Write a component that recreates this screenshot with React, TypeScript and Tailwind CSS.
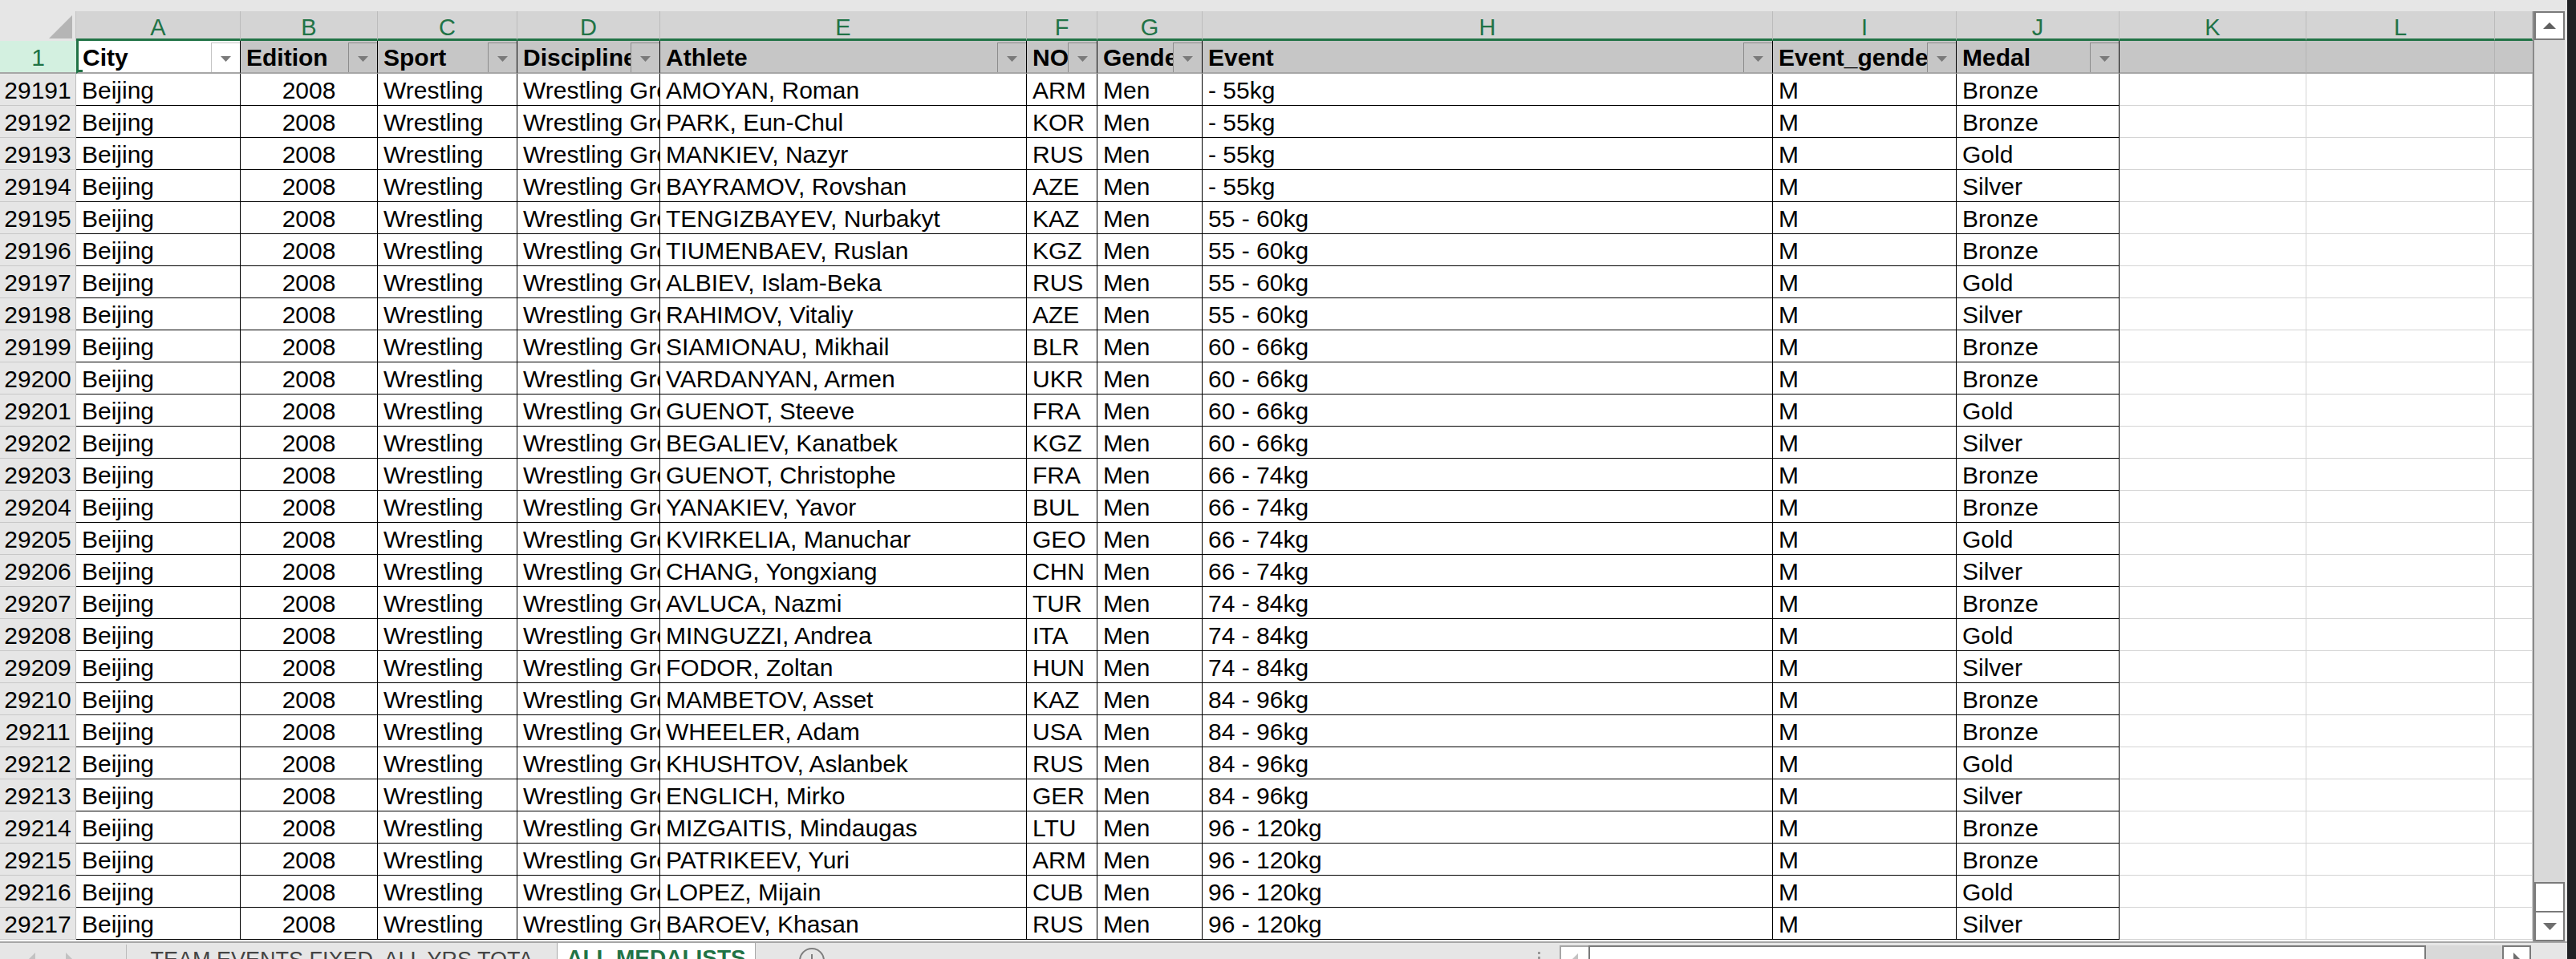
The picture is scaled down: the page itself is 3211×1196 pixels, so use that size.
import React from 'react';

const rows: [string, string, string, string, string][] = [
  ['29191', 'AMOYAN, Roman', 'ARM', '- 55kg', 'Bronze'],
  ['29192', 'PARK, Eun-Chul', 'KOR', '- 55kg', 'Bronze'],
  ['29193', 'MANKIEV, Nazyr', 'RUS', '- 55kg', 'Gold'],
  ['29194', 'BAYRAMOV, Rovshan', 'AZE', '- 55kg', 'Silver'],
  ['29195', 'TENGIZBAYEV, Nurbakyt', 'KAZ', '55 - 60kg', 'Bronze'],
  ['29196', 'TIUMENBAEV, Ruslan', 'KGZ', '55 - 60kg', 'Bronze'],
  ['29197', 'ALBIEV, Islam-Beka', 'RUS', '55 - 60kg', 'Gold'],
  ['29198', 'RAHIMOV, Vitaliy', 'AZE', '55 - 60kg', 'Silver'],
  ['29199', 'SIAMIONAU, Mikhail', 'BLR', '60 - 66kg', 'Bronze'],
  ['29200', 'VARDANYAN, Armen', 'UKR', '60 - 66kg', 'Bronze'],
  ['29201', 'GUENOT, Steeve', 'FRA', '60 - 66kg', 'Gold'],
  ['29202', 'BEGALIEV, Kanatbek', 'KGZ', '60 - 66kg', 'Silver'],
  ['29203', 'GUENOT, Christophe', 'FRA', '66 - 74kg', 'Bronze'],
  ['29204', 'YANAKIEV, Yavor', 'BUL', '66 - 74kg', 'Bronze'],
  ['29205', 'KVIRKELIA, Manuchar', 'GEO', '66 - 74kg', 'Gold'],
  ['29206', 'CHANG, Yongxiang', 'CHN', '66 - 74kg', 'Silver'],
  ['29207', 'AVLUCA, Nazmi', 'TUR', '74 - 84kg', 'Bronze'],
  ['29208', 'MINGUZZI, Andrea', 'ITA', '74 - 84kg', 'Gold'],
  ['29209', 'FODOR, Zoltan', 'HUN', '74 - 84kg', 'Silver'],
  ['29210', 'MAMBETOV, Asset', 'KAZ', '84 - 96kg', 'Bronze'],
  ['29211', 'WHEELER, Adam', 'USA', '84 - 96kg', 'Bronze'],
  ['29212', 'KHUSHTOV, Aslanbek', 'RUS', '84 - 96kg', 'Gold'],
  ['29213', 'ENGLICH, Mirko', 'GER', '84 - 96kg', 'Silver'],
  ['29214', 'MIZGAITIS, Mindaugas', 'LTU', '96 - 120kg', 'Bronze'],
  ['29215', 'PATRIKEEV, Yuri', 'ARM', '96 - 120kg', 'Bronze'],
  ['29216', 'LOPEZ, Mijain', 'CUB', '96 - 120kg', 'Gold'],
  ['29217', 'BAROEV, Khasan', 'RUS', '96 - 120kg', 'Silver'],
];

const letters = ['A', 'B', 'C', 'D', 'E', 'F', 'G', 'H', 'I', 'J', 'K', 'L', ''];
const heads = ['Edition', 'Sport', 'Discipline', 'Athlete', 'NOC', 'Gender', 'Event', 'Event_gender', 'Medal'];

function Tri({ color = '#7a7a7a' }: { color?: string }) {
  return (
    <svg width="13" height="7" viewBox="0 0 13 7">
      <path d="M0 0H13L6.5 7Z" fill={color} />
    </svg>
  );
}

function Drop({ light }: { light?: boolean }) {
  return (
    <div
      className={
        light
          ? 'absolute right-0 top-[2px] bottom-0 w-[36px] border-l border-t border-[#c4c4c4] bg-white flex items-center justify-center pt-[2px]'
          : 'absolute right-0 top-[2px] bottom-0 w-[36px] border-l border-t border-[#8c8c8c] bg-[#c6c6c6] flex items-center justify-center pt-[2px]'
      }
    >
      <Tri />
    </div>
  );
}

const cell = 'h-[40px] border-b border-r border-black pl-[7px] whitespace-nowrap overflow-hidden leading-[42px]';
const cellC = 'h-[40px] border-b border-r border-black whitespace-nowrap overflow-hidden leading-[42px] text-center';
const cellE = 'h-[40px] border-b border-r border-[#d4d4d4] bg-white';

export default function App() {
  return (
    <div className="w-[3211px] h-[1196px] flex overflow-hidden bg-[#e6e6e6] font-['Liberation_Sans',Arial,sans-serif] text-black">
      <div className="w-[3200px] h-full flex flex-col">
        <div className="h-[14px] bg-[#e6e6e6]" />
        <div className="h-[1160px] flex">
          <div className="w-[3157px] h-full overflow-hidden bg-white">
            <div className="grid grid-cols-[95px_205px_171px_174px_178px_457px_88px_131px_711px_229px_203px_233px_235px_47px] text-[30px]">
              {/* letter row */}
              <div className="h-[37px] bg-[#e6e6e6] border-r border-[#c4c4c4] flex items-end justify-end pr-[4px] pb-[3px]">
                <svg width="29" height="29" viewBox="0 0 29 29">
                  <path d="M29 0V29H0Z" fill="#b5b5b5" />
                </svg>
              </div>
              {letters.map((l, i) => (
                <div
                  key={'l' + i}
                  className="h-[37px] bg-[#d4d4d4] border-r border-[#bcbcbc] border-b-[3px] border-b-[#217346] flex justify-center pt-[6px] text-[29px] leading-[29px] text-[#217346]"
                >
                  {l}
                </div>
              ))}

              {/* header row */}
              <div className="h-[41px] bg-[#d3f0e0] border-b-2 border-b-[#a6a6a6] text-center leading-[42px] text-[#217346]">1</div>
              <div className="h-[41px] relative bg-white border-l-[3px] border-l-[#217346] border-r border-r-black border-b-2 border-b-[#a6a6a6] pl-[5px] font-bold leading-[42px] whitespace-nowrap overflow-hidden">
                City
                <Drop light />
                <div className="absolute left-0 bottom-0 w-[5px] h-[3px] bg-[#217346]" />
              </div>
              {heads.map((h) => (
                <div
                  key={h}
                  className="h-[41px] relative bg-[#c6c6c6] border-r border-r-black border-b-2 border-b-[#a6a6a6] pl-[7px] font-bold leading-[42px] whitespace-nowrap overflow-hidden"
                >
                  {h}
                  <Drop />
                </div>
              ))}
              <div className="h-[41px] bg-[#c6c6c6] border-r border-r-[#b4b4b4] border-b-2 border-b-[#a6a6a6]" />
              <div className="h-[41px] bg-[#c6c6c6] border-r border-r-[#b4b4b4] border-b-2 border-b-[#a6a6a6]" />
              <div className="h-[41px] bg-[#c6c6c6] border-b-2 border-b-[#a6a6a6]" />

              {/* data rows */}
              {rows.map((r) => (
                <React.Fragment key={r[0]}>
                  <div className="h-[40px] bg-[#e6e6e6] border-b border-b-[#c8c8c8] border-r border-r-[#bdbdbd] text-center leading-[42px] overflow-hidden">
                    {r[0]}
                  </div>
                  <div className={cell}>Beijing</div>
                  <div className={cellC}>2008</div>
                  <div className={cell}>Wrestling</div>
                  <div className={cell}>Wrestling Greco-Roman</div>
                  <div className={cell}>{r[1]}</div>
                  <div className={cell}>{r[2]}</div>
                  <div className={cell}>Men</div>
                  <div className={cell}>{r[3]}</div>
                  <div className={cell}>M</div>
                  <div className={cell}>{r[4]}</div>
                  <div className={cellE} />
                  <div className={cellE} />
                  <div className={cellE} />
                </React.Fragment>
              ))}
            </div>
          </div>
          {/* vertical scrollbar */}
          <div className="w-[43px] h-full flex border-l-2 border-[#8a8a8a] bg-[#e6e6e6]">
            <div className="w-[38px] h-full flex flex-col bg-[#d9d9d9]">
              <div className="h-[36px] bg-white border-2 border-[#7a7a7a] flex items-center justify-center">
                <svg width="16" height="8" viewBox="0 0 16 8">
                  <path d="M8 0L16 8H0Z" fill="#5f5f5f" />
                </svg>
              </div>
              <div className="flex-1" />
              <div className="h-[38px] bg-white border-2 border-[#7a7a7a]" />
              <div className="h-[36px] bg-white border-2 border-t-0 border-[#7a7a7a] flex items-center justify-center">
                <svg width="17" height="9" viewBox="0 0 17 9">
                  <path d="M0 0H17L8.5 9Z" fill="#6e6e6e" />
                </svg>
              </div>
            </div>
          </div>
        </div>
        {/* bottom bar */}
        <div className="h-[22px] flex border-t-2 border-[#a6a6a6] bg-[#e6e6e6] overflow-hidden">
          <div className="w-[157px] flex items-start">
            <svg className="ml-[35px] mt-[12px]" width="9" height="18" viewBox="0 0 9 18">
              <path d="M9 0V18L0 9Z" fill="#c2c2c2" />
            </svg>
            <svg className="ml-[38px] mt-[12px]" width="9" height="18" viewBox="0 0 9 18">
              <path d="M0 0L9 9L0 18Z" fill="#c2c2c2" />
            </svg>
          </div>
          <div className="w-[537px] mt-[2px] h-[40px] border-l border-[#bcbcbc] text-center text-[27px] leading-[27px] pt-[6px] text-[#444444] whitespace-nowrap overflow-hidden">
            TEAM EVENTS FIXED, ALL YRS TOTA
          </div>
          <div className="w-[248px] h-[40px] bg-white border-l border-r border-[#a8a8a8] text-center text-[28px] leading-[28px] pt-[5px] font-bold text-[#217346] whitespace-nowrap overflow-hidden">
            ALL MEDALISTS
          </div>
          <div className="w-[975px] flex items-start">
            <svg className="ml-[54px] mt-[6px]" width="32" height="32" viewBox="0 0 32 32">
              <circle cx="16" cy="16" r="15" fill="none" stroke="#7f7f7f" strokeWidth="2" />
              <path d="M16 8V24M8 16H24" stroke="#7f7f7f" strokeWidth="2" />
            </svg>
          </div>
          <div className="w-[27px] flex flex-col items-start pt-[11px] gap-[3px]">
            <div className="w-[3px] h-[3px] bg-[#9a9a9a]" />
            <div className="w-[3px] h-[3px] bg-[#9a9a9a]" />
          </div>
          <div className="w-[1211px] flex mt-[3px]">
            <div className="w-[36px] h-[30px] bg-white border-t-2 border-l-2 border-[#a6a6a6] flex justify-center pt-[8px]">
              <svg width="8" height="16" viewBox="0 0 8 16">
                <path d="M8 0V16L0 8Z" fill="#c2c2c2" />
              </svg>
            </div>
            <div className="w-[1044px] h-[30px] bg-white border-2 border-[#7a7a7a]" />
            <div className="w-[95px] h-[30px] bg-[#d9d9d9]" />
            <div className="w-[36px] h-[30px] bg-white border-2 border-[#7a7a7a] flex justify-center pt-[7px]">
              <svg width="8" height="16" viewBox="0 0 8 16">
                <path d="M0 0L8 8L0 16Z" fill="#6e6e6e" />
              </svg>
            </div>
          </div>
          <div className="flex-1" />
        </div>
      </div>
      <div className="w-[11px] h-full bg-[#202124]" />
    </div>
  );
}
